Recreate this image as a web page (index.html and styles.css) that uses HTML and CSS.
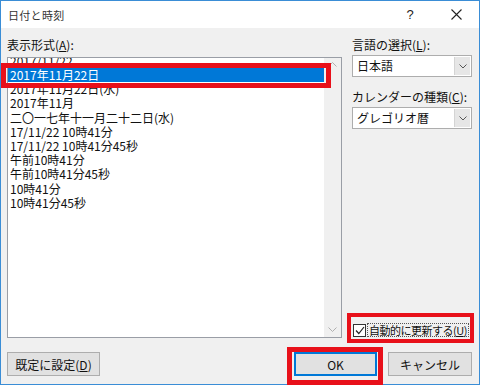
FILE: index.html
```html
<!DOCTYPE html>
<html lang="ja">
<head>
  <meta charset="UTF-8" />
  <title>日付と時刻</title>
  <link rel="stylesheet" href="styles.css">
</head>
<body>
  <div class="window">
    <div class="titlebar">
      <span class="title">日付と時刻</span>
      <span class="tb-btn help">?</span>
      <span class="tb-btn close">
        <svg width="11" height="11" viewBox="0 0 11 11"><path d="M0.5 0.5 L10.5 10.5 M10.5 0.5 L0.5 10.5" stroke="#222" stroke-width="1.1" fill="none"/></svg>
      </span>
    </div>

    <div class="content">
      <div class="main">
        <div class="left">
          <div class="label">表示形式(<u>A</u>):</div>
          <div class="listbox">
            <div class="items">
              <div class="item">2017/11/22</div>
              <div class="item selected">2017年11月22日</div>
              <div class="item">2017年11月22日(水)</div>
              <div class="item">2017年11月</div>
              <div class="item">二〇一七年十一月二十二日(水)</div>
              <div class="item">17/11/22 10時41分</div>
              <div class="item">17/11/22 10時41分45秒</div>
              <div class="item">午前10時41分</div>
              <div class="item">午前10時41分45秒</div>
              <div class="item">10時41分</div>
              <div class="item">10時41分45秒</div>
            </div>
            <div class="scrollbar">
              <svg width="9" height="5" viewBox="0 0 9 5"><path d="M0.5 4.5 L4.5 0.5 L8.5 4.5" stroke="#b0b0b0" fill="none"/></svg>
              <svg width="9" height="5" viewBox="0 0 9 5"><path d="M0.5 0.5 L4.5 4.5 L8.5 0.5" stroke="#b0b0b0" fill="none"/></svg>
            </div>
          </div>
        </div>

        <div class="right">
          <div class="label">言語の選択(<u>L</u>):</div>
          <div class="select">
            <span class="select-text">日本語</span>
            <span class="select-btn">
              <svg width="8" height="5" viewBox="0 0 8 5"><path d="M0.5 0.5 L4 4 L7.5 0.5" stroke="#555" fill="none"/></svg>
            </span>
          </div>
          <div class="label second">カレンダーの種類(<u>C</u>):</div>
          <div class="select">
            <span class="select-text">グレゴリオ暦</span>
            <span class="select-btn">
              <svg width="8" height="5" viewBox="0 0 8 5"><path d="M0.5 0.5 L4 4 L7.5 0.5" stroke="#555" fill="none"/></svg>
            </span>
          </div>
          <div class="check-row">
            <span class="checkbox">
              <svg width="10" height="9" viewBox="0 0 10 9"><path d="M1 4.5 L3.8 7.5 L9 1" stroke="#222" stroke-width="1.2" fill="none"/></svg>
            </span>
            <span class="check-label">自動的に更新する(<u>U</u>)</span>
          </div>
        </div>
      </div>

      <div class="footer">
        <button class="btn">既定に設定(<u>D</u>)</button>
        <button class="btn ok">OK</button>
        <button class="btn cancel">キャンセル</button>
      </div>
    </div>

    <!-- annotation boxes -->
    <div class="mark mark-list"></div>
    <div class="mark mark-check"></div>
    <div class="mark mark-ok"></div>
  </div>
</body>
</html>
```

FILE: styles.css
```css
* { box-sizing: border-box; }

html, body {
  margin: 0;
  padding: 0;
  background: #f0f0f0;
  font-family: "Noto Sans CJK JP", sans-serif;
  font-size: 12px;
  color: #111;
}

u { text-decoration: underline; text-underline-offset: 1px; }

.window {
  position: relative;
  width: 480px;
  height: 385px;
  border: 1px solid #3a8dd6;
  background: #f0f0f0;
  display: flex;
  flex-direction: column;
}

.titlebar {
  height: 27px;
  background: #fff;
  display: flex;
  align-items: center;
}

.title {
  flex: 1;
  padding-left: 7px;
  font-size: 11px;
  color: #333;
  letter-spacing: 0.3px;
}

.tb-btn {
  width: 46px;
  height: 27px;
  display: flex;
  align-items: center;
  justify-content: center;
}

.help {
  font-family: "Liberation Sans", sans-serif;
  font-size: 13px;
  color: #222;
}

.content {
  flex: 1;
  display: flex;
  flex-direction: column;
  padding: 9px 7px 0 6px;
}

.main {
  display: flex;
  gap: 10px;
}

.left {
  width: 335px;
}

.right {
  flex: 1;
  display: flex;
  flex-direction: column;
  min-width: 0;
}

.label {
  height: 16px;
  line-height: 16px;
  margin-bottom: 2px;
  white-space: nowrap;
}

.left .label { margin-bottom: 4px; }

.label.second { margin-top: 12px; }

.listbox {
  height: 281px;
  border: 1px solid #9a9ea6;
  background: #fff;
  display: flex;
  overflow: hidden;
}

.items {
  flex: 1;
  margin-top: -4.2px;
}

.item {
  height: 14.2px;
  line-height: 14px;
  padding-left: 2px;
  white-space: nowrap;
}

.item.selected {
  background: #0078d7;
  color: #fff;
}

.scrollbar {
  width: 17px;
  background: #f0f0f0;
  display: flex;
  flex-direction: column;
  justify-content: space-between;
  align-items: center;
  padding: 4px 0 5px;
}

.select {
  height: 22px;
  border: 1px solid #adadad;
  background: #fff;
  display: flex;
}

.select-text {
  flex: 1;
  line-height: 20px;
  padding-left: 4px;
}

.select-btn {
  width: 16px;
  margin: 1px;
  background: #e6e6e6;
  border-left: 1px solid #d4d4d4;
  display: flex;
  align-items: center;
  justify-content: center;
}

.check-row {
  margin-top: auto;
  margin-bottom: 1px;
  display: flex;
  align-items: center;
  gap: 1px;
  padding-left: 1px;
  white-space: nowrap;
}

.checkbox {
  flex: none;
  width: 13px;
  height: 13px;
  border: 1px solid #333;
  background: #fff;
  display: flex;
  align-items: center;
  justify-content: center;
}

.check-label {
  border: 1px dotted #555;
  font-size: 11px;
  letter-spacing: -0.5px;
  line-height: 12px;
  padding: 0 1px;
}

.footer {
  margin-top: 14px;
  display: flex;
  gap: 11px;
}

.btn {
  height: 24px;
  border: 1px solid #adadad;
  background: #e1e1e1;
  font-family: inherit;
  font-size: 12px;
  color: #111;
  padding: 0;
}

.btn:first-child { width: 93px; }

.btn.ok {
  width: 83px;
  margin-left: auto;
  border: 2px solid #0078d7;
}

.btn.cancel { width: 84px; }

.mark {
  position: absolute;
  border: 5px solid #e8101a;
}

.mark-list {
  left: 0;
  top: 62px;
  width: 330px;
  height: 25px;
}

.mark-check {
  left: 346px;
  top: 312px;
  width: 127px;
  height: 30px;
  border-width: 4px;
}

.mark-ok {
  left: 286px;
  top: 346px;
  width: 96px;
  height: 38px;
}
```
